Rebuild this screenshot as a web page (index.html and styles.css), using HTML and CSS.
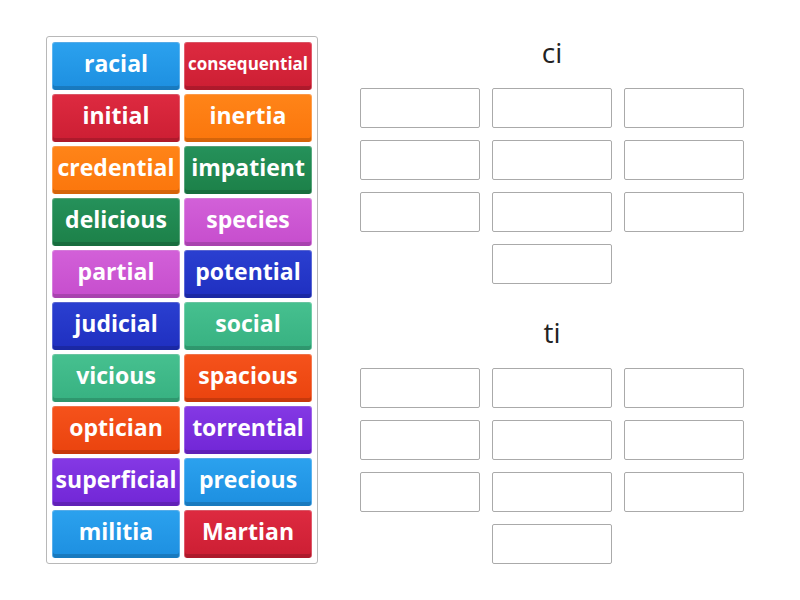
FILE: index.html
```html
<!DOCTYPE html>
<html>
<head>
<meta charset="utf-8">
<link rel="stylesheet" href="styles.css">
</head>
<body>
<div class="page">
  <div class="bank">
    <div class="tile blue">racial</div>
    <div class="tile red small">consequential</div>
    <div class="tile red">initial</div>
    <div class="tile orange">inertia</div>
    <div class="tile orange">credential</div>
    <div class="tile dgreen">impatient</div>
    <div class="tile dgreen">delicious</div>
    <div class="tile pink">species</div>
    <div class="tile pink">partial</div>
    <div class="tile dblue">potential</div>
    <div class="tile dblue">judicial</div>
    <div class="tile mint">social</div>
    <div class="tile mint">vicious</div>
    <div class="tile rorange">spacious</div>
    <div class="tile rorange">optician</div>
    <div class="tile purple">torrential</div>
    <div class="tile purple">superficial</div>
    <div class="tile blue">precious</div>
    <div class="tile blue">militia</div>
    <div class="tile red">Martian</div>
  </div>
  <div class="groups">
    <div class="group">
      <div class="title">ci</div>
      <div class="slots">
        <div class="slot"></div><div class="slot"></div><div class="slot"></div>
        <div class="slot"></div><div class="slot"></div><div class="slot"></div>
        <div class="slot"></div><div class="slot"></div><div class="slot"></div>
        <div class="slot mid"></div>
      </div>
    </div>
    <div class="group">
      <div class="title">ti</div>
      <div class="slots">
        <div class="slot"></div><div class="slot"></div><div class="slot"></div>
        <div class="slot"></div><div class="slot"></div><div class="slot"></div>
        <div class="slot"></div><div class="slot"></div><div class="slot"></div>
        <div class="slot mid"></div>
      </div>
    </div>
  </div>
</div>
</body>
</html>
```
FILE: styles.css
```css
html, body {
  margin: 0;
  padding: 0;
  background: #fff;
  font-family: "Open Sans", "Noto Sans", sans-serif;
}
.page {
  display: flex;
  align-items: flex-start;
  padding: 36px 0 0 46px;
}
.bank {
  display: grid;
  grid-template-columns: 128px 128px;
  grid-auto-rows: 48px;
  gap: 4px;
  padding: 5px 5px 5px 5px;
  border: 1px solid #b8b8b8;
  border-radius: 3px;
}
.tile {
  display: flex;
  align-items: center;
  justify-content: center;
  color: #fff;
  font-weight: 700;
  font-size: 23px;
  border-radius: 3px;
  white-space: nowrap;
  padding-bottom: 8px;
  box-sizing: border-box;
  border: 1px solid rgba(255,255,255,0.25);
  border-bottom: none;
  box-shadow: inset 0 -4px 0 rgba(0,0,0,0.15);
}
.tile.small { font-size: 17px; padding-bottom: 6px; }
.blue { background: linear-gradient(#2ba1ee, #1d8fe0); }
.red { background: linear-gradient(#dd2a40, #cc1e33); }
.orange { background: linear-gradient(#ff8418, #fb760c); }
.dgreen { background: linear-gradient(#25915a, #1c8048); }
.pink { background: linear-gradient(#d260d8, #c64dcd); }
.dblue { background: linear-gradient(#2a3fd0, #1f2fc0); }
.mint { background: linear-gradient(#46c08f, #37b181); }
.rorange { background: linear-gradient(#f5521b, #ea430e); }
.purple { background: linear-gradient(#8438e4, #7126d6); }

.groups {
  margin-left: 42px;
  margin-top: -1px;
  display: flex;
  flex-direction: column;
}
.group + .group { margin-top: 31px; }
.title {
  text-align: center;
  font-size: 28px;
  color: #222;
  height: 53px;
  line-height: 34px;
}
.slots {
  display: grid;
  grid-template-columns: 120px 120px 120px;
  grid-auto-rows: 40px;
  gap: 12px;
}
.slot {
  border: 1px solid #aaa;
  border-radius: 2px;
  box-sizing: border-box;
}
.slot.mid { grid-column: 2; }
```
